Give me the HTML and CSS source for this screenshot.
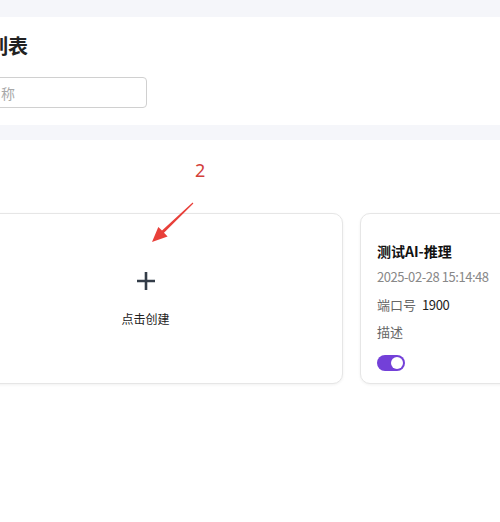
FILE: index.html
```html
<!DOCTYPE html>
<html lang="zh-CN">
<head>
    <meta charset="UTF-8">
    <title>服务列表</title>
    <link rel="stylesheet" href="styles.css">
</head>
<body>
    <div class="page">
        <div class="header">
            <h1 class="title">服务列表</h1>
            <input class="search" type="text" placeholder="服务名称">
        </div>
        <div class="content">
            <div class="mark-num">2</div>
            <svg class="mark-arrow" width="60" height="60" viewBox="140 195 60 60">
                <polygon points="152,242 158.3,227 162,230.6 192.6,202.6 193.4,203.4 164,232.8 167.6,236.6" fill="#e8403a"/>
            </svg>
            <div class="cards">
                <div class="card card-new">
                    <svg class="plus" width="18" height="18" viewBox="0 0 18 18">
                        <path d="M9 0v18M0 9h18" stroke="#333c48" stroke-width="2.6"/>
                    </svg>
                    <div class="new-text">点击创建</div>
                </div>
                <div class="card card-item">
                    <div class="item-name">测试AI-推理</div>
                    <div class="item-time">2025-02-28 15:14:48</div>
                    <div class="item-row"><span class="label">端口号</span><span class="value">1900</span></div>
                    <div class="item-row"><span class="label">描述</span></div>
                    <div class="switch"><span class="knob"></span></div>
                </div>
            </div>
        </div>
    </div>
</body>
</html>
```

FILE: styles.css
```css
html, body {
    overflow: hidden;
}

body {
    margin: 0;
    background: #f5f6fa;
    font-family: "Noto Sans CJK SC", "Noto Sans", sans-serif;
    color: #222;
    height: 522px;
}

.page {
    margin-left: -52px;
    padding-top: 17px;
    width: 900px;
}

.header {
    background: #fff;
    padding: 15px 0 17px 0;
}

.title {
    margin: 0 0 17px 0;
    font-size: 20px;
    line-height: 28px;
    font-weight: 700;
    color: #222;
}

.search {
    display: block;
    box-sizing: border-box;
    width: 199px;
    height: 31px;
    border: 1px solid #d0d0d0;
    border-radius: 4px;
    padding: 0 10px;
    font-family: inherit;
    font-size: 14px;
    color: #333;
    outline: none;
}

.search::placeholder {
    color: #a8a8a8;
}

.content {
    position: relative;
    margin-top: 15px;
    background: #fff;
    padding-top: 73px;
    height: 400px;
}

.mark-num {
    position: absolute;
    left: 247px;
    top: 18px;
    font-family: "Noto Sans", sans-serif;
    font-size: 18px;
    line-height: 24px;
    color: #d3403a;
}

.mark-arrow {
    position: absolute;
    left: 192px;
    top: 55px;
}

.cards {
    display: flex;
    gap: 17px;
}

.card {
    box-sizing: border-box;
    width: 395px;
    height: 171px;
    background: #fff;
    border: 1px solid #e6e6e6;
    border-radius: 10px;
    box-shadow: 0 1px 3px rgba(0, 0, 0, 0.06);
}

.card-new {
    display: flex;
    flex-direction: column;
    align-items: center;
    justify-content: center;
    padding-top: 2px;
}

.plus {
    display: block;
    margin-bottom: 20px;
}

.new-text {
    font-size: 12px;
    line-height: 18px;
    color: #222;
}

.card-item {
    display: flex;
    flex-direction: column;
    align-items: flex-start;
    padding: 27px 17px 0 16px;
}

.item-name {
    font-size: 14px;
    line-height: 20px;
    font-weight: 700;
    color: #111;
}

.item-time {
    margin-top: 6px;
    font-size: 13px;
    line-height: 20px;
    letter-spacing: -0.45px;
    color: #888;
}

.item-row {
    margin-top: 8px;
    font-size: 13px;
    line-height: 20px;
}

.item-row + .item-row {
    margin-top: 7px;
}

.label {
    color: #666;
}

.value {
    margin-left: 6px;
    letter-spacing: -0.4px;
    color: #222;
}

.switch {
    position: relative;
    margin-top: 13px;
    width: 28px;
    height: 16px;
    border-radius: 8px;
    background: #7340d8;
}

.knob {
    position: absolute;
    right: 2px;
    top: 2px;
    width: 12px;
    height: 12px;
    border-radius: 50%;
    background: #fff;
}
```
